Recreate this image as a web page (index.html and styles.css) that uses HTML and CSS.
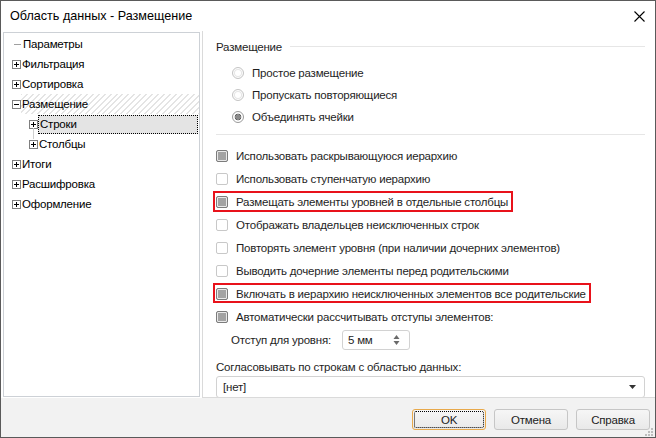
FILE: index.html
```html
<!DOCTYPE html>
<html lang="ru">
<head>
<meta charset="utf-8">
<title>Область данных - Размещение</title>
<link rel="stylesheet" href="styles.css">
</head>
<body>
<div class="window">
  <div class="titlebar">
    <span class="title">Область данных - Размещение</span>
    <svg class="close" width="11" height="11" viewBox="0 0 11 11"><path d="M0.5 0.5 L10.5 10.5 M10.5 0.5 L0.5 10.5" stroke="#000" stroke-width="1.1" fill="none"/></svg>
  </div>
  <div class="main">
    <div class="tree">
      <div class="node"><span class="leafline"></span><span class="label">Параметры</span></div>
      <div class="node"><span class="exp plus"></span><span class="label">Фильтрация</span></div>
      <div class="node"><span class="exp plus"></span><span class="label">Сортировка</span></div>
      <div class="node"><span class="exp minus"></span><span class="label hatched">Размещение</span></div>
      <div class="node sub"><span class="exp plus"></span><span class="label selected">Строки</span></div>
      <div class="node sub tail"><span class="exp plus"></span><span class="label">Столбцы</span></div>
      <div class="node"><span class="exp plus"></span><span class="label">Итоги</span></div>
      <div class="node"><span class="exp plus"></span><span class="label">Расшифровка</span></div>
      <div class="node"><span class="exp plus"></span><span class="label">Оформление</span></div>
    </div>
    <div class="panel">
      <div class="group-head"><span>Размещение</span><span class="hline"></span></div>
      <div class="radio-row"><span class="radio"></span><span>Простое размещение</span></div>
      <div class="radio-row"><span class="radio"></span><span>Пропускать повторяющиеся</span></div>
      <div class="radio-row"><span class="radio on"></span><span>Объединять ячейки</span></div>
      <div class="sep"></div>
      <div class="checks">
        <div class="check-row"><span class="item"><span class="cb on"></span><span>Использовать раскрывающуюся иерархию</span></span></div>
        <div class="check-row"><span class="item"><span class="cb"></span><span>Использовать ступенчатую иерархию</span></span></div>
        <div class="check-row"><span class="item marked"><span class="cb on"></span><span>Размещать элементы уровней в отдельные столбцы</span></span></div>
        <div class="check-row"><span class="item"><span class="cb"></span><span>Отображать владельцев неисключенных строк</span></span></div>
        <div class="check-row"><span class="item"><span class="cb"></span><span>Повторять элемент уровня (при наличии дочерних элементов)</span></span></div>
        <div class="check-row"><span class="item"><span class="cb"></span><span>Выводить дочерние элементы перед родительскими</span></span></div>
        <div class="check-row"><span class="item marked low"><span class="cb on"></span><span>Включать в иерархию неисключенных элементов все родительские</span></span></div>
        <div class="check-row"><span class="item"><span class="cb on"></span><span>Автоматически рассчитывать отступы элементов:</span></span></div>
      </div>
      <div class="spin-row">
        <span>Отступ для уровня:</span>
        <div class="spin"><span>5 мм</span>
          <svg width="7" height="12" viewBox="0 0 7 12"><path d="M3.5 1 L6.5 5 L0.5 5 Z M0.5 7 L6.5 7 L3.5 11 Z" fill="#6a6a6a"/></svg>
        </div>
      </div>
      <div class="combo-label">Согласовывать по строкам с областью данных:</div>
      <div class="combo"><span>[нет]</span>
        <svg width="7" height="4" viewBox="0 0 7 4"><path d="M0 0 L7 0 L3.5 4 Z" fill="#333"/></svg>
      </div>
    </div>
  </div>
  <div class="footer">
    <button class="btn default"><span class="focus">OK</span></button>
    <button class="btn">Отмена</button>
    <button class="btn">Справка</button>
    <svg class="grip" width="8" height="8" viewBox="0 0 8 8"><g fill="#bdbdbd"><rect x="6" y="0" width="2" height="2"/><rect x="3" y="3" width="2" height="2"/><rect x="6" y="3" width="2" height="2"/><rect x="0" y="6" width="2" height="2"/><rect x="3" y="6" width="2" height="2"/><rect x="6" y="6" width="2" height="2"/></g></svg>
  </div>
</div>
</body>
</html>
```
FILE: styles.css
```css
html, body {
  margin: 0;
  padding: 0;
  background: #fff;
}
body {
  font-family: "Liberation Sans", Arial, sans-serif;
  font-size: 11.5px;
  letter-spacing: -0.2px;
  color: #000;
}
.window {
  width: 656px;
  height: 438px;
  box-sizing: border-box;
  border: 1px solid #5a5a5a;
  background: #fff;
  display: flex;
  flex-direction: column;
}
.titlebar {
  flex: none;
  height: 30px;
  display: flex;
  align-items: center;
  justify-content: space-between;
  padding: 0 10px 0 9px;
}
.title {
  font-size: 12.6px;
  letter-spacing: 0;
  color: #000;
}
.close {
  display: block;
}
.main {
  flex: none;
  height: 367px;
  display: flex;
  padding-left: 2px;
}
.tree {
  flex: none;
  margin-top: 1px;
  width: 197px;
  height: 365px;
  box-sizing: border-box;
  border: 1px solid #cdd1d6;
  padding-top: 1px;
}
.node {
  position: relative;
  height: 20px;
  display: flex;
  align-items: center;
  padding-left: 8px;
}
.node.sub {
  padding-left: 25px;
}
.node.tail::before {
  content: "";
  position: absolute;
  left: 29px;
  top: -6px;
  height: 11px;
  border-left: 1px solid #cfcfcf;
}
.leafline {
  width: 7px;
  height: 1px;
  background: #a0a0a0;
  margin-left: 2px;
  margin-right: 1px;
  flex: none;
}
.exp {
  position: relative;
  flex: none;
  width: 9px;
  height: 9px;
  box-sizing: border-box;
  border: 1px solid #7f7f7f;
  background: #fff;
}
.exp::before {
  content: "";
  position: absolute;
  left: 1px;
  top: 3px;
  width: 5px;
  height: 1px;
  background: #000;
}
.exp.plus::after {
  content: "";
  position: absolute;
  left: 3px;
  top: 1px;
  width: 1px;
  height: 5px;
  background: #000;
}
.label {
  flex: 1;
  height: 20px;
  line-height: 20px;
  padding-left: 1px;
  white-space: nowrap;
}
.hatched {
  background: repeating-linear-gradient(135deg, #e4e4e4 0 1.4px, #fff 1.4px 4.2px);
}
.selected {
  height: 19px;
  line-height: 17px;
  box-sizing: border-box;
  background: #e4e4e4;
  border: 1px dotted #000;
  margin-right: 1px;
}
.panel {
  flex: 1;
  min-width: 0;
  margin-left: 2px;
  border-left: 1px solid #dadada;
  border-bottom: 1px solid #dadada;
  overflow: hidden;
  padding: 0 10px 0 13px;
  color: #1e1e1e;
}
.group-head {
  height: 31px;
  display: flex;
  align-items: center;
  gap: 8px;
}
.hline {
  flex: 1;
  height: 1px;
  background: #e6e6e6;
}
.radio-row {
  height: 22px;
  display: flex;
  align-items: center;
  gap: 8px;
  padding-left: 16px;
}
.radio {
  flex: none;
  width: 12px;
  height: 12px;
  box-sizing: border-box;
  border-radius: 50%;
  border: 1px solid #c4c4c4;
  background: #fff;
  box-shadow: inset 0 0 0 1px #fff, inset 0 0 0 2px #e6e6e6;
}
.radio.on {
  border-color: #9a9a9a;
  background: radial-gradient(circle, #8a8a8a 0 2.6px, #5e5e5e 2.6px 3.3px, #fff 3.6px);
  box-shadow: none;
}
.sep {
  margin-top: 6px;
  height: 1px;
  background: #e6e6e6;
}
.checks {
  padding-top: 9px;
}
.check-row {
  height: 23px;
  display: flex;
  align-items: center;
}
.item {
  position: relative;
  display: inline-flex;
  align-items: center;
  gap: 8px;
  white-space: nowrap;
}
.item.marked::after {
  content: "";
  position: absolute;
  left: -3px;
  right: -5px;
  top: -5px;
  height: 21px;
  box-sizing: border-box;
  border: 2px solid #e8121b;
}
.item.marked.low::after {
  top: -5px;
  height: 20px;
}
.cb {
  flex: none;
  width: 12px;
  height: 12px;
  box-sizing: border-box;
  border: 1px solid #c8c8c8;
  border-radius: 2px;
  background: #fff;
}
.cb.on {
  border-color: #7c7c7c;
  background: #a3a3a3;
  box-shadow: inset 0 0 0 1px #e9e9e9;
}
.spin-row {
  margin-top: 2px;
  height: 20px;
  display: flex;
  align-items: center;
  gap: 11px;
  padding-left: 15px;
}
.spin {
  width: 68px;
  height: 20px;
  box-sizing: border-box;
  border: 1px solid #d2d2d2;
  border-radius: 3px;
  display: flex;
  align-items: center;
  justify-content: space-between;
  padding: 0 9px 0 5px;
}
.spin svg {
  display: block;
}
.combo-label {
  margin-top: 9px;
  height: 16px;
  line-height: 16px;
}
.combo {
  margin-top: 1px;
  height: 22px;
  box-sizing: border-box;
  border: 1px solid #d2d2d2;
  border-radius: 3px;
  display: flex;
  align-items: center;
  justify-content: space-between;
  padding: 0 8px 0 6px;
}
.combo svg {
  display: block;
  margin-top: -1px;
}
.footer {
  position: relative;
  flex: 1;
  background: #f2f2f2;
  display: flex;
  justify-content: flex-end;
  align-items: flex-start;
  gap: 8px;
  padding: 11px 5px 0 0;
}
.btn {
  width: 74px;
  height: 21px;
  box-sizing: border-box;
  border: 1px solid #c6c6c6;
  border-radius: 3px;
  background: linear-gradient(#f6f6f6, #e9e9e9);
  font-family: "Liberation Sans", Arial, sans-serif;
  font-size: 11.5px;
  letter-spacing: -0.2px;
  color: #222;
  padding: 0;
  display: flex;
  align-items: center;
  justify-content: center;
}
.btn.default {
  border-color: #e8a94b;
  padding: 1px;
}
.focus {
  flex: 1;
  align-self: stretch;
  display: flex;
  align-items: center;
  justify-content: center;
  border: 1px dotted #000;
  border-radius: 2px;
}
.grip {
  position: absolute;
  right: 2px;
  bottom: 1px;
}
```
